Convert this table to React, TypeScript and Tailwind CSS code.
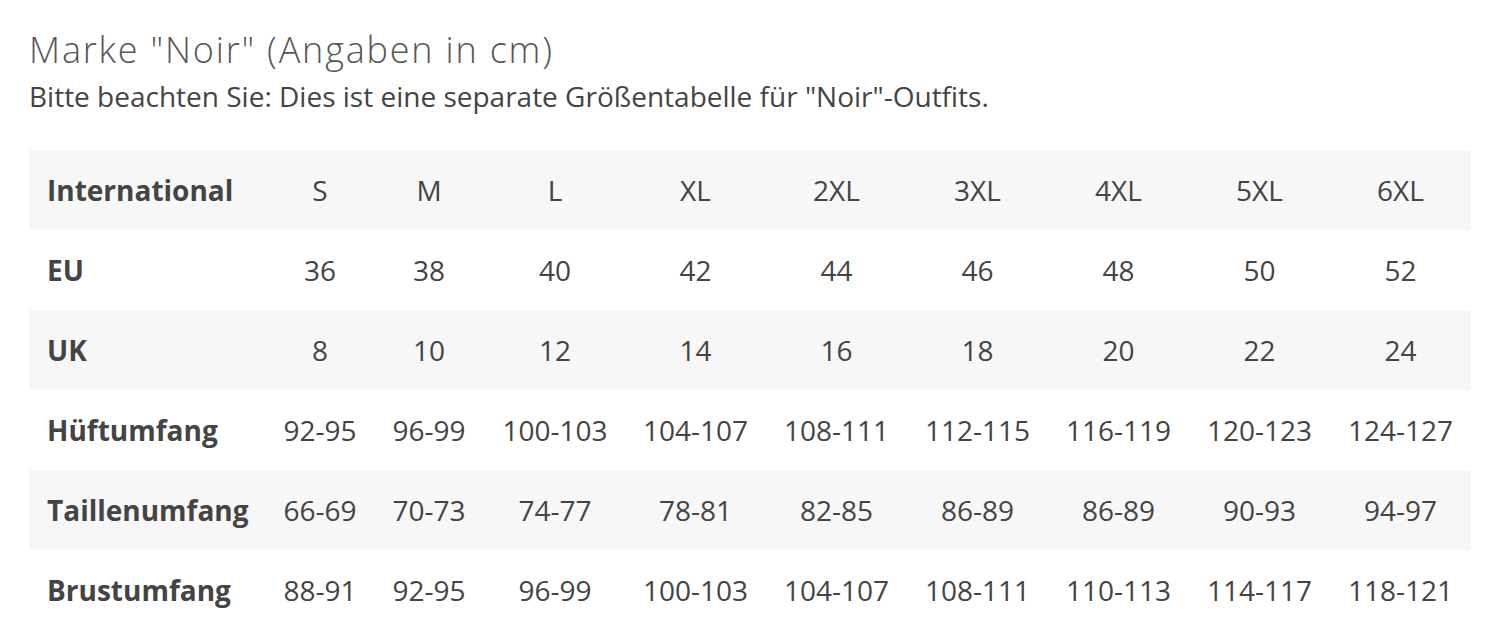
const rows: [string, string[]][] = [
  ["International", ["S", "M", "L", "XL", "2XL", "3XL", "4XL", "5XL", "6XL"]],
  ["EU", ["36", "38", "40", "42", "44", "46", "48", "50", "52"]],
  ["UK", ["8", "10", "12", "14", "16", "18", "20", "22", "24"]],
  ["Hüftumfang", ["92-95", "96-99", "100-103", "104-107", "108-111", "112-115", "116-119", "120-123", "124-127"]],
  ["Taillenumfang", ["66-69", "70-73", "74-77", "78-81", "82-85", "86-89", "86-89", "90-93", "94-97"]],
  ["Brustumfang", ["88-91", "92-95", "96-99", "100-103", "104-107", "108-111", "110-113", "114-117", "118-121"]],
];

export default function App() {
  return (
    <main className="min-h-screen bg-white text-[#444] font-['Open_Sans',sans-serif] px-[29px] pt-[26px]">
      <h1 className="text-[36px] leading-[48px] font-light text-[#555] tracking-[1.8px]">
        Marke "Noir" (Angaben in cm)
      </h1>
      <p className="text-[28px] leading-[36px] mt-[4px] text-[#444]">
        Bitte beachten Sie: Dies ist eine separate Größentabelle für "Noir"-Outfits.
      </p>

      <table className="w-[1442px] mt-[36px] border-collapse table-fixed">
        <colgroup>
          <col className="w-[238px]" />
          <col className="w-[106px]" />
          <col className="w-[112px]" />
          <col className="w-[140px]" />
          <col className="w-[141px]" />
          <col className="w-[141px]" />
          <col className="w-[141px]" />
          <col className="w-[141px]" />
          <col className="w-[141px]" />
          <col className="w-[141px]" />
        </colgroup>
        <tbody>
          {rows.map(([label, values], i) => (
            <tr key={label} className={i % 2 === 0 ? "bg-[#f7f7f7]" : "bg-white"}>
              <td className="h-[80px] pl-[18px] text-[28px] font-bold text-[#444] whitespace-nowrap">
                {label}
              </td>
              {values.map((v, j) => (
                <td key={j} className="h-[80px] text-[28px] text-center text-[#444] whitespace-nowrap">
                  {v}
                </td>
              ))}
            </tr>
          ))}
        </tbody>
      </table>
    </main>
  );
}
